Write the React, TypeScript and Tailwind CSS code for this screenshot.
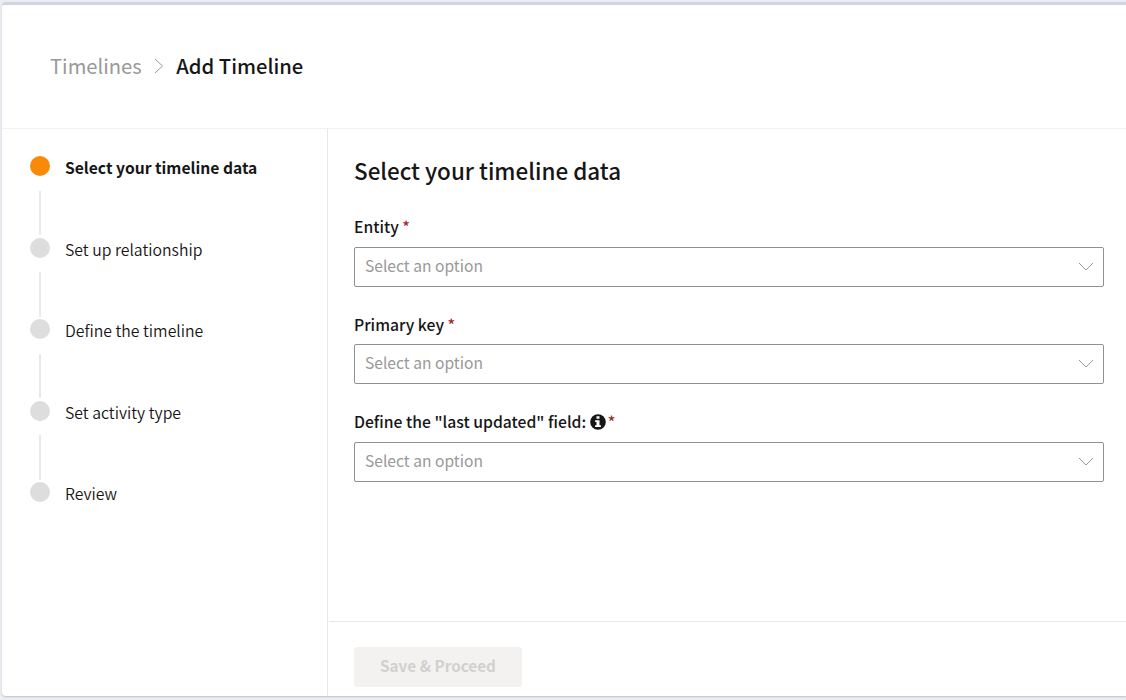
const steps = [
  "Select your timeline data",
  "Set up relationship",
  "Define the timeline",
  "Set activity type",
  "Review",
];

const fields = [
  { label: "Entity", info: false },
  { label: "Primary key", info: false },
  { label: 'Define the "last updated" field:', info: true },
];

function InfoIcon() {
  return (
    <svg viewBox="0 0 16 16" className="-mt-px -mr-[2px] ml-1 h-4 w-4 shrink-0">
      <circle cx="8" cy="8" r="7.8" fill="#161616" />
      <path d="M6.5 2.3h3v2.5h-3zM5.1 6.2h4.4v5.1h1.4v1.8H5.1v-1.8h1.4V8H5.1z" fill="#fff" />
    </svg>
  );
}

export default function App() {
  return (
    <div className="h-[700px] w-full overflow-hidden bg-[#ebeef3] pl-[2px] pt-[2px] font-['Noto_Sans_CJK_SC','Noto_Sans',sans-serif] text-[#161616]">
      <div className="flex h-[694px] flex-col overflow-hidden rounded-l-[4px] border-t-[3px] border-[#d1d5df] bg-white shadow-[0_1px_2px_#b9c0cc]">
        <header className="flex h-[124px] shrink-0 items-center border-b border-[#f0f0f0] pb-[2px] pl-12 text-[20.2px] leading-[30px]">
          <span className="text-[#999]">Timelines</span>
          <svg viewBox="0 0 10 16" className="ml-3 mr-[12.5px] mt-px h-4 w-[10px]" fill="none" stroke="#999">
            <path d="M1 1l7.5 7L1 15" />
          </svg>
          <h1 className="font-medium">Add Timeline</h1>
        </header>
        <div className="flex min-h-0 flex-1">
          <nav className="w-[326px] shrink-0 border-r border-[#e8e8e8] pl-7 pt-[27px]">
            {steps.map((s, i) => (
              <div key={s} className="flex h-[81.5px] gap-[15px]">
                <div className="flex w-5 flex-col items-center">
                  <span className={i === 0 ? "h-5 w-5 shrink-0 rounded-full bg-[#f78b07]" : "h-5 w-5 shrink-0 rounded-full bg-[#ddd]"} />
                  {i < steps.length - 1 && <span className="mt-[14.9px] h-[44.5px] w-[2px] bg-[#e9e9e9]" />}
                </div>
                <span className={i === 0 ? "mt-px h-[22px] text-[15.65px] leading-[22px] font-bold" : "mt-px h-[22px] text-[15.8px] leading-[22px] font-[350]"}>{s}</span>
              </div>
            ))}
          </nav>
          <main className="flex flex-1 flex-col">
            <section className="flex-1 pl-[26px] pr-[22px] pt-[24px]">
              <h2 className="mb-[2px] text-[22.44px] leading-[34px] font-medium">Select your timeline data</h2>
              {fields.map((f) => (
                <div key={f.label} className="pt-[26px]">
                  <div className="mb-[7.5px] flex h-6 items-center text-[15.72px] leading-6 font-medium">
                    <span>{f.label}</span>
                    {f.info && <InfoIcon />}
                    <span className="ml-[3.5px] text-[#a4262c]">*</span>
                  </div>
                  <div className="flex h-10 items-center justify-between rounded-[2px] border border-[#919191] pl-[10px] pr-[9px] text-[15.6px] text-[#999]">
                    <span className="pb-[2px]">Select an option</span>
                    <svg viewBox="0 0 16 9" className="-mt-px h-[9px] w-4" fill="none" stroke="#999">
                      <path d="M1 1l7 7 7-7" />
                    </svg>
                  </div>
                </div>
              ))}
            </section>
            <footer className="ml-px h-[75px] border-t border-[#e8e8e8] pl-[25px] pt-[25px]">
              <button disabled className="h-10 w-[168px] rounded-[3px] bg-[#f3f2f1] pb-[3px] text-[15.3px] font-bold text-[#d2d0ce]">Save &amp; Proceed</button>
            </footer>
          </main>
        </div>
      </div>
    </div>
  );
}
